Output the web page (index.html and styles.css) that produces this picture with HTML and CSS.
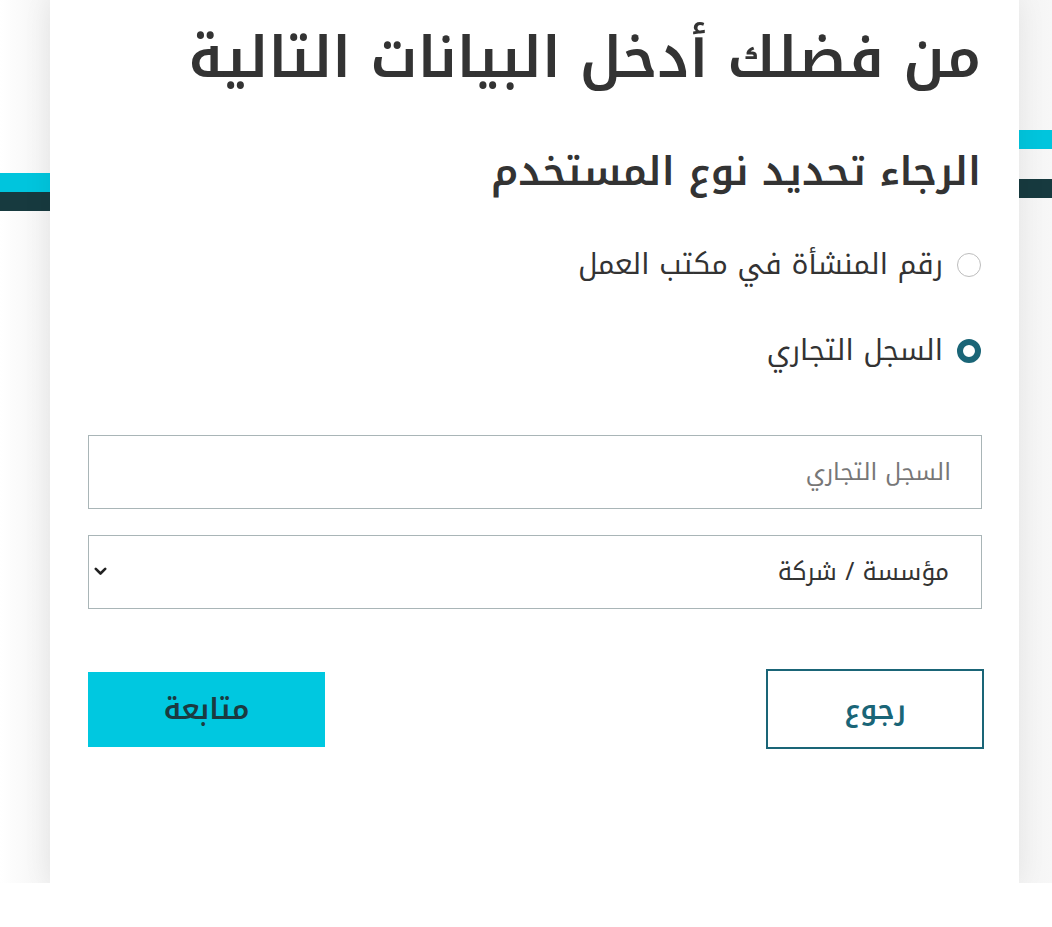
FILE: index.html
```html
<!DOCTYPE html>
<html lang="ar" dir="rtl">
<head>
<meta charset="utf-8">
<title>نوع المستخدم</title>
<link rel="stylesheet" href="styles.css">
</head>
<body>
<div class="page">
  <div class="stripe stripe-left-cyan"></div>
  <div class="stripe stripe-left-dark"></div>
  <div class="stripe stripe-right-cyan"></div>
  <div class="stripe stripe-right-dark"></div>
  <main class="card">
    <h1 class="title">من فضلك أدخل البيانات التالية</h1>
    <h2 class="subtitle">الرجاء تحديد نوع المستخدم</h2>
    <div class="options">
      <label class="option">
        <span class="radio"></span>
        <span class="option-text">رقم المنشأة في مكتب العمل</span>
      </label>
      <label class="option">
        <span class="radio checked"></span>
        <span class="option-text">السجل التجاري</span>
      </label>
    </div>
    <div class="field">
      <span class="placeholder">السجل التجاري</span>
    </div>
    <div class="field select">
      <span class="select-value">مؤسسة / شركة</span>
      <svg class="chevron" width="13" height="9" viewBox="0 0 13 9"><path d="M1.8 1.8 L6.5 6.5 L11.2 1.8" fill="none" stroke="#222" stroke-width="2.6" stroke-linecap="round" stroke-linejoin="round"/></svg>
    </div>
    <div class="actions">
      <button class="btn btn-back">رجوع</button>
      <button class="btn btn-next">متابعة</button>
    </div>
  </main>
</div>
</body>
</html>
```

FILE: styles.css
```css
* { box-sizing: border-box; }
html, body {
  margin: 0;
  padding: 0;
  background: #ffffff;
  font-family: "Noto Kufi Arabic", "Noto Sans Arabic", "Noto Sans", sans-serif;
  color: #333333;
}
.page {
  position: relative;
  height: 883px;
  background: linear-gradient(to right, #ffffff 0px, #f4f4f4 50px, #f4f4f4 1019px, #f7f7f7 1052px);
  overflow: hidden;
}
.stripe {
  position: absolute;
  height: 19px;
}
.stripe-left-cyan { left: 0; width: 60px; top: 173px; background: #00c5dd; }
.stripe-left-dark { left: 0; width: 60px; top: 192px; background: #173a3f; }
.stripe-right-cyan { right: 0; width: 50px; top: 130px; background: #00c5dd; }
.stripe-right-dark { right: 0; width: 50px; top: 179px; background: #173a3f; }

.card {
  position: relative;
  z-index: 1;
  margin-right: 33px;
  width: 969px;
  height: 883px;
  background: #ffffff;
  box-shadow: 0 0 28px rgba(0, 0, 0, 0.07);
  padding: 23px 38px 0 38px;
}
.title {
  margin: 0;
  font-size: 56.7px;
  line-height: 70px;
  font-weight: 600;
  color: #333333;
}
.subtitle {
  margin: 51px 0 0 0;
  font-size: 39.4px;
  line-height: 56px;
  font-weight: 600;
  color: #333333;
}
.options {
  display: flex;
  flex-direction: column;
  gap: 46px;
  margin-top: 45px;
}
.option {
  display: flex;
  align-items: center;
  gap: 14px;
  height: 40px;
  font-size: 28.5px;
  color: #333333;
}
.radio {
  width: 24px;
  height: 24px;
  border-radius: 50%;
  border: 1.5px solid #bdbdbd;
  background: #ffffff;
  flex: none;
}
.radio.checked {
  border: 6px solid #1a6577;
}
.option-text { line-height: 40px; }
.field {
  display: flex;
  align-items: center;
  justify-content: space-between;
  height: 74px;
  width: 894px;
  margin-right: -1px;
  border: 1px solid #a9b5b7;
  padding: 0 30px 0 5px;
  font-size: 23.5px;
  margin-top: 64px;
}
.field + .field { margin-top: 26px; }
.placeholder { color: #777777; }
.select { padding-right: 32px; }
.select-value { color: #333333; font-size: 24.5px; }
.chevron { display: block; margin-top: -2px; }
.actions {
  display: flex;
  justify-content: space-between;
  align-items: center;
  margin-top: 60px;
  width: 897px;
  margin-right: -3px;
}
.btn {
  font-family: inherit;
  font-weight: 600;
  cursor: pointer;
  padding: 0;
}
.btn-back {
  width: 218px;
  height: 80px;
  background: #ffffff;
  border: 2px solid #1a6577;
  color: #1a6577;
  font-size: 28px;
}
.btn-next {
  width: 237px;
  height: 75px;
  background: #00c8e0;
  border: none;
  color: #1b3a40;
  margin-left: 1px;
  font-size: 29px;
}
```
